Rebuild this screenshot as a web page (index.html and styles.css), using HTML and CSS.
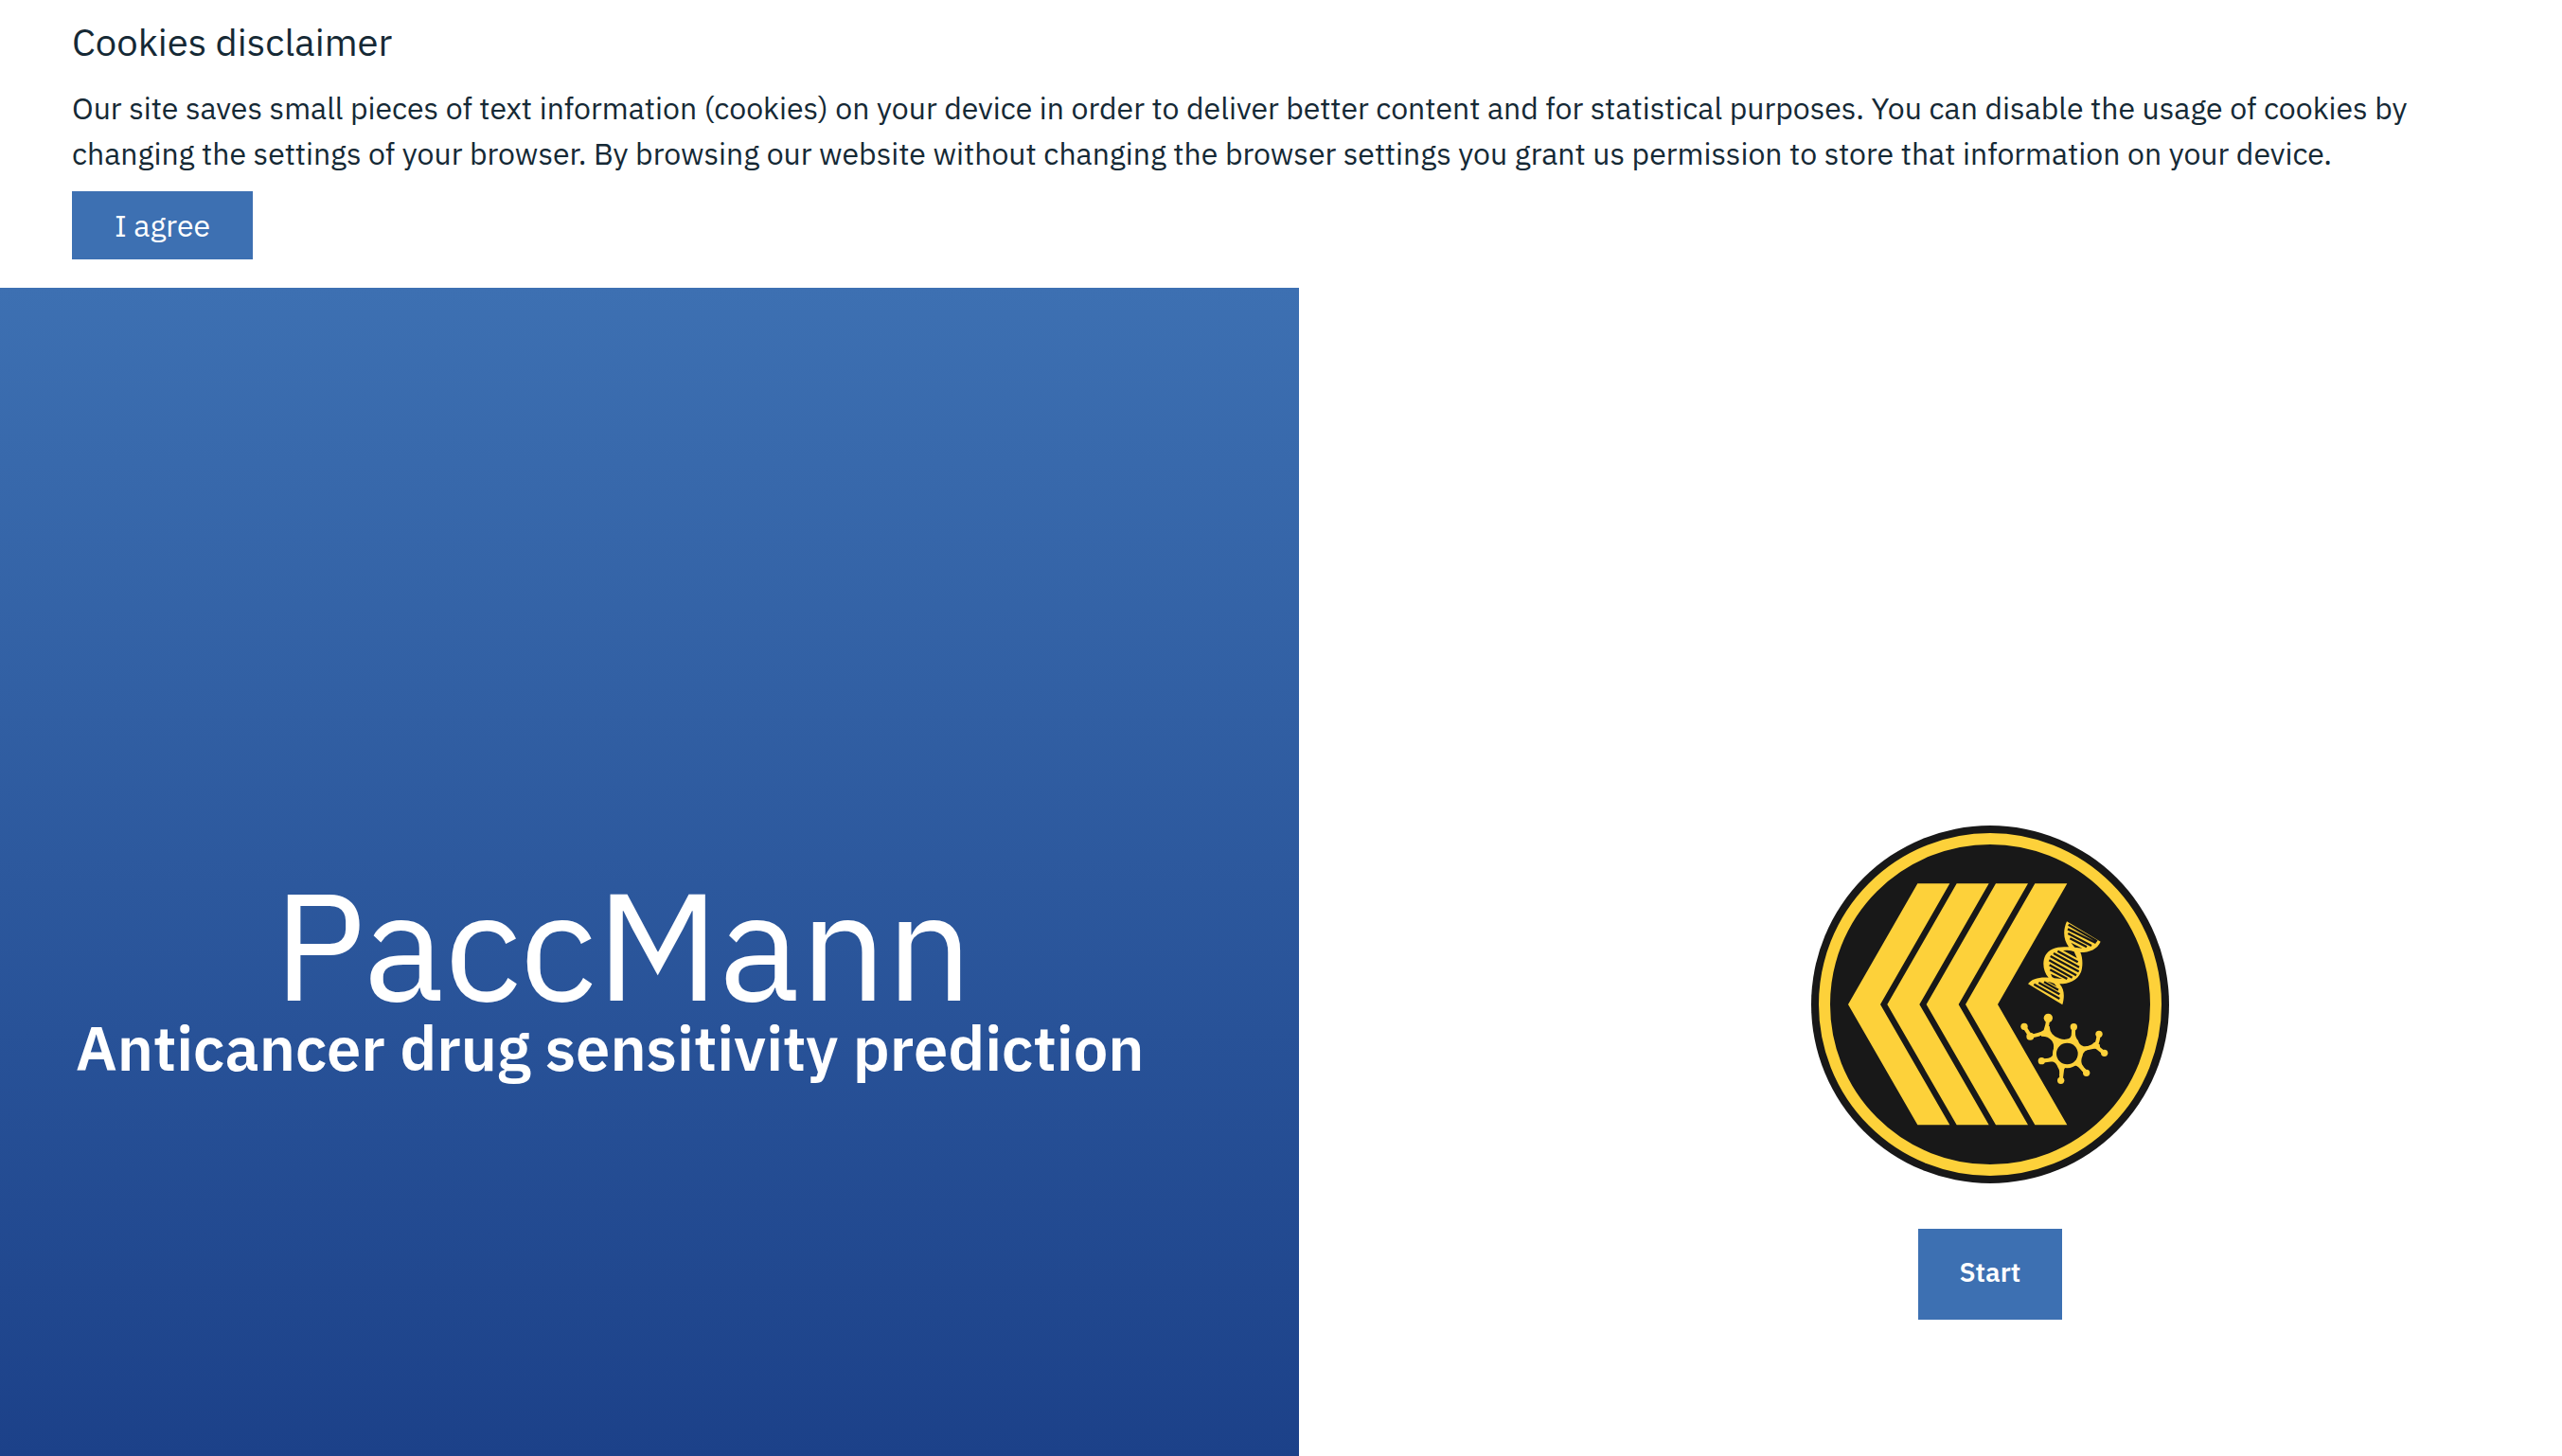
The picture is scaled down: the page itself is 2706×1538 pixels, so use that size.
FILE: index.html
```html
<!DOCTYPE html>
<html lang="en">
<head>
<meta charset="utf-8">
<meta name="viewport" content="width=device-width, initial-scale=1">
<title>PaccMann</title>
<link rel="stylesheet" href="styles.css">
</head>
<body>
<section class="cookies" aria-labelledby="cookies-title">
  <h2 class="cookies-title" id="cookies-title">Cookies disclaimer</h2>
  <p class="cookies-text">Our site saves small pieces of text information (cookies) on your device in order to deliver better content and for statistical purposes. You can disable the usage of cookies by changing the settings of your browser. By browsing our website without changing the browser settings you grant us permission to store that information on your device.</p>
  <button class="button agree" type="button">I agree</button>
</section>
<main class="landing">
  <section class="hero">
    <div class="hero-copy">
      <h1 class="hero-title">PaccMann</h1>
      <p class="hero-subtitle">Anticancer drug sensitivity prediction</p>
    </div>
  </section>
  <section class="entry">
    <svg class="logo" viewBox="39 36 1134 1134" role="img" aria-label="PaccMann logo">
      <circle cx="606" cy="603" r="567" fill="#181818"/>
      <circle cx="606" cy="603" r="525" fill="none" stroke="#fdd13a" stroke-width="36"/>
      <g fill="#fdd13a">
        <path d="M376 220H478L258 603 478 985H376L156 603Z"/>
        <path d="M500 220H602L382 603 602 985H500L280 603Z"/>
        <path d="M624 220H726L506 603 726 985H624L404 603Z"/>
        <path d="M748 220H850L630 603 850 985H748L528 603Z"/>
      </g>
      <!-- DNA helix -->
      <g transform="translate(660 300)">
        <path fill="#fdd13a" d="M189 40L296 104C285 128 262 138 232 138C240 155 240 183 234 200C222 228 195 238 166 238C182 255 182 280 175 304L66 238C78 222 100 216 131 218C113 198 111 168 121 148C133 126 158 118 195 121C178 98 176 68 189 40Z"/>
        <g fill="none" stroke="#181818" stroke-width="7">
          <path d="M194 50L285 103M192 64L281 108M193 78L267 117M199 94L252 121"/>
          <path d="M160 134L224 169M147 141L228 185M137 150L227 199M133 163L219 211M134 178L206 218M136 193L190 222"/>
          <path d="M117 232L162 257M100 234L166 271M85 239L166 285"/>
        </g>
        <path fill="#181818" d="M202 107L238 125 214 122ZM177 132Q200 129 212 136L221 156ZM138 206Q140 216 149 220L174 222ZM127 230Q140 232 149 237L157 247Z"/>
      </g>
      <!-- molecule -->
      <g transform="translate(660 300)">
        <g fill="none" stroke="#fdd13a" stroke-width="12">
          <circle cx="190" cy="459" r="40"/>
          <path d="M54 373L73 403Q100 402 121 388Q128 370 130 346M121 388L158 424M211 374L208 420M291 397Q287 420 281 436L308 457M281 436L231 446M251 520L221 487M170 544L176 496M109 482L154 476"/>
        </g>
        <path fill="#fdd13a" d="M108 397Q120 386 124 372H134Q135 388 143 397Q152 408 166 411Q182 417 196 411Q206 404 206 390H216Q215 408 225 418Q228 431 242 436Q262 438 277 422L293 430 296 450Q281 439 264 443Q241 449 239 465Q232 482 237 493Q243 505 250 509L240 516Q230 500 211 495Q194 494 183 504Q174 515 175 530L165 529Q168 512 161 503Q155 487 143 484Q128 479 118 486L116 476Q133 477 143 466Q150 455 147 442Q149 428 141 417Q129 403 108 404Z"/>
        <circle cx="190" cy="459" r="34" fill="#181818"/>
        <g fill="#fdd13a">
          <circle cx="130" cy="346" r="14"/><circle cx="54" cy="373" r="11"/>
          <circle cx="73" cy="404" r="12"/><circle cx="211" cy="374" r="11"/>
          <circle cx="291" cy="397" r="11"/><circle cx="308" cy="457" r="11"/>
          <circle cx="251" cy="520" r="11"/><circle cx="170" cy="544" r="11"/>
          <circle cx="109" cy="482" r="11"/>
        </g>
      </g>
    </svg>
    <button class="button start" type="button">Start</button>
  </section>
</main>
</body>
</html>
```
FILE: styles.css
```css
* {
  box-sizing: border-box;
}

body {
  display: flex;
  flex-direction: column;
  min-height: 100vh;
  margin: 0;
  background: #fff;
  color: #152935;
  font-family: "IBM Plex Sans", "Noto Sans", sans-serif;
  font-size: 32px;
  line-height: 48px;
}

h1, h2, p {
  margin: 0;
}

.cookies {
  padding: 14px 76px 30px;
}

.cookies-title {
  margin-bottom: 16px;
  font-size: 40px;
  font-weight: 400;
  line-height: 60px;
}

.cookies-text {
  margin-bottom: 16px;
}

.button {
  display: block;
  padding: 0 44px;
  border: 0;
  background: #3d70b2;
  color: #fff;
  font-family: inherit;
}

.agree {
  height: 72px;
  padding: 0 45px;
  font-size: 32px;
}

.landing {
  display: grid;
  grid-template-columns: 50.7% 1fr;
  flex: 1;
}

.hero {
  display: flex;
  align-items: center;
  padding: 212px 136px 0 80px;
  background: linear-gradient(#3d70b2, #1c4189);
  color: #fff;
}

.hero-copy {
  flex: 1;
}

.hero-title {
  font-size: 160px;
  font-weight: 400;
  line-height: 160px;
  text-align: center;
}

.hero-subtitle {
  font-size: 65px;
  font-weight: 600;
  line-height: 60px;
}

.entry {
  display: flex;
  flex-direction: column;
  align-items: center;
  justify-content: flex-end;
  gap: 48px;
  padding: 0 0 144px 126px;
}

.logo {
  width: 378px;
  height: 378px;
}

.start {
  height: 96px;
  padding-bottom: 6px;
  font-size: 28px;
  font-weight: 600;
}
```
